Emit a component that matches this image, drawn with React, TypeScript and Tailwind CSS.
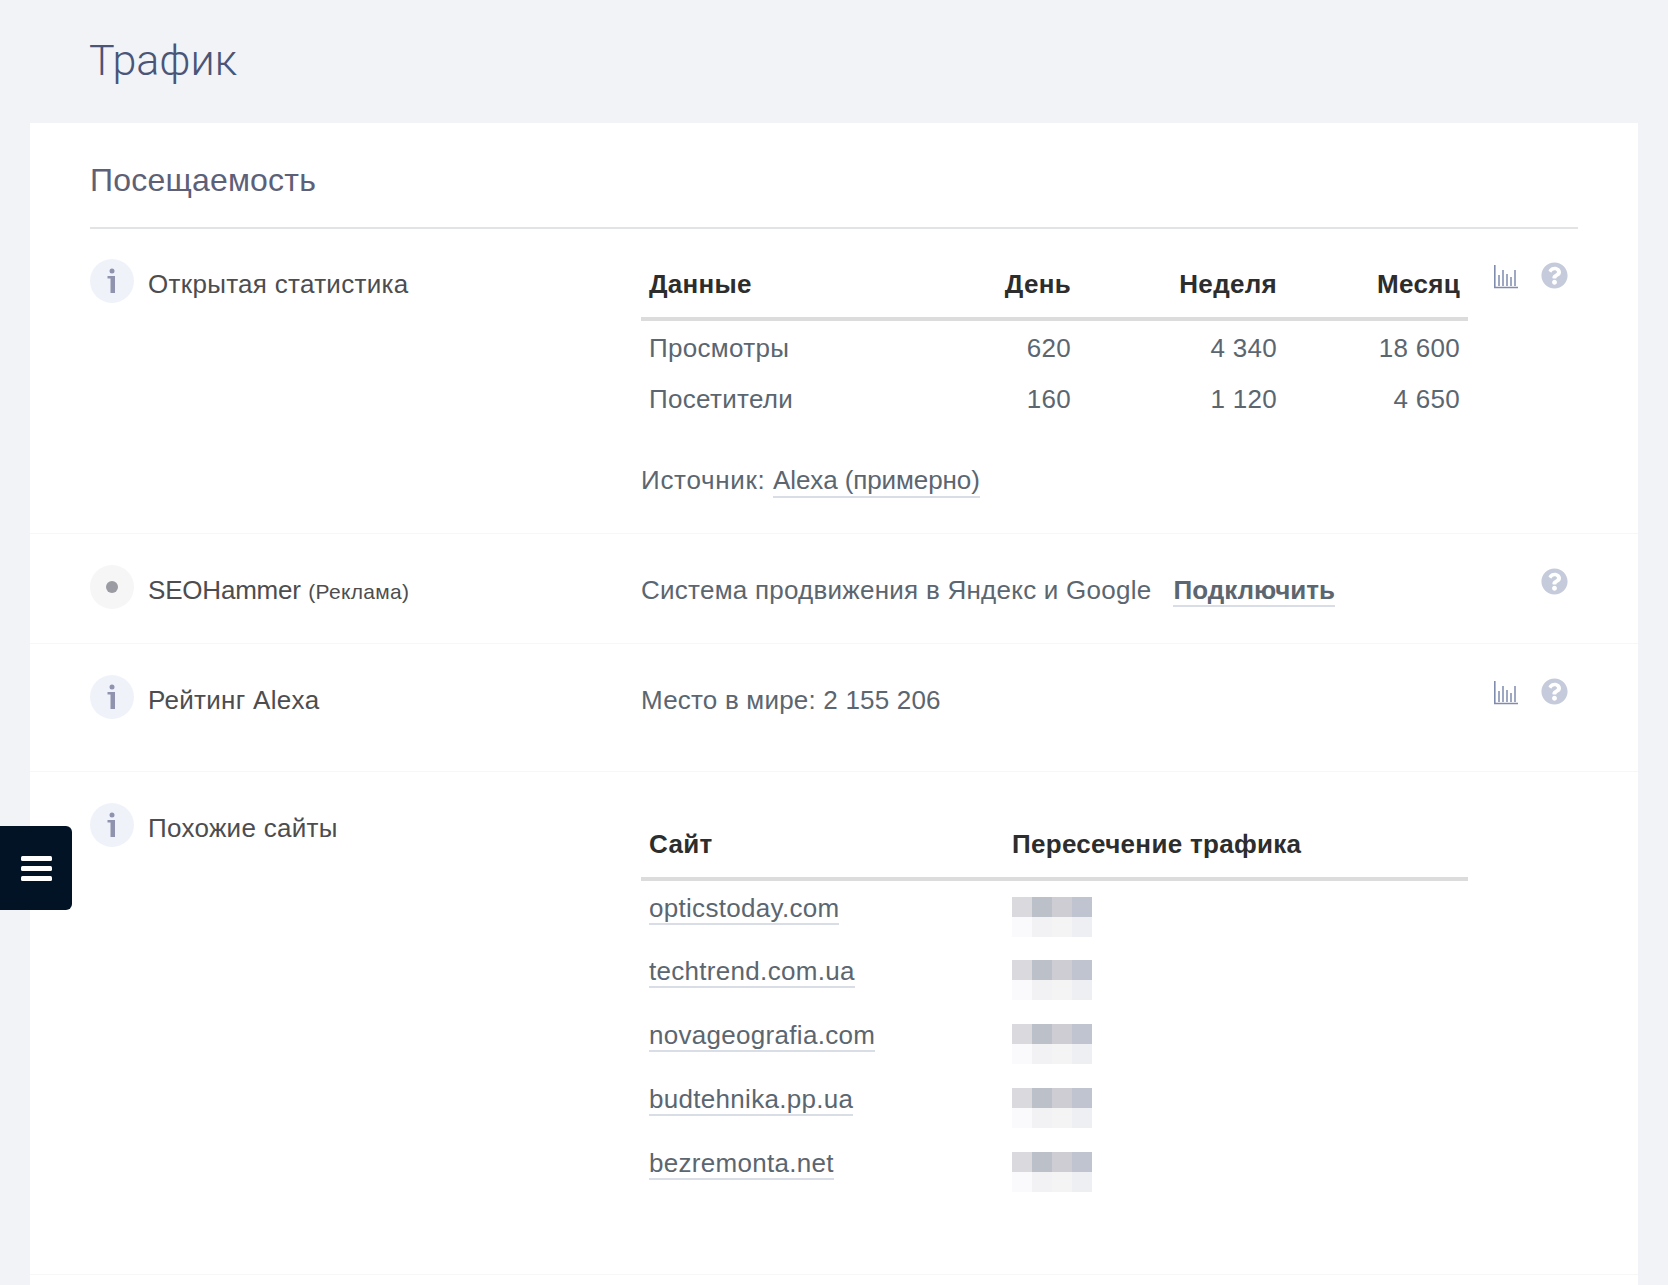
import React from 'react';
import { FaQuestionCircle } from 'react-icons/fa';

const sites = ['opticstoday.com', 'techtrend.com.ua', 'novageografia.com', 'budtehnika.pp.ua', 'bezremonta.net'];

const visits = [
  { name: 'Просмотры', day: '620', week: '4 340', month: '18 600' },
  { name: 'Посетители', day: '160', week: '1 120', month: '4 650' },
];

function InfoBadge() {
  return (
    <div className="flex h-11 w-11 shrink-0 items-center justify-center rounded-full bg-[#eff3f9]">
      <svg width="12" height="26" viewBox="0 0 12 26" fill="#8f93ad">
        <circle cx="6" cy="3" r="2.500" />
        <path d="M1.500 8h7.500v17H4.500V10.500h-3z" />
      </svg>
    </div>
  );
}

function DotBadge() {
  return (
    <div className="flex h-11 w-11 shrink-0 items-center justify-center rounded-full bg-[#f6f6f7]">
      <div className="h-3 w-3 rounded-full bg-[#9a9ba3]" />
    </div>
  );
}

function ChartIcon() {
  return (
    <svg width="24" height="24" viewBox="0 0 24 24" stroke="#7f8cae" fill="none" className="mt-[3px]">
      <path strokeWidth="1.600" d="M0.800 0v22.500H24" />
      <path strokeWidth="1.500" d="M5 10v11M9 5v16M13 9v12M17 12v9M21 5v16" />
    </svg>
  );
}

function Actions({ chart }: { chart?: boolean }) {
  return (
    <div className="ml-[26px] flex w-[74px] shrink-0 items-start justify-end gap-[23px] pt-[3px]">
      {chart && <ChartIcon />}
      <FaQuestionCircle size={27} color="#c5cbdb" />
    </div>
  );
}

function BlurThumb() {
  return (
    <div className="grid w-[80px] grid-cols-4 blur-[0.6px]">
      <div className="h-5 bg-[#d9d9de]" />
      <div className="h-5 bg-[#bcc0c8]" />
      <div className="h-5 bg-[#cdcdd3]" />
      <div className="h-5 bg-[#bfc4d0]" />
      <div className="h-5 bg-[#fafafc]" />
      <div className="h-5 bg-[#f2f2f4]" />
      <div className="h-5 bg-[#f4f4f5]" />
      <div className="h-5 bg-[#eeeff2]" />
    </div>
  );
}

function Row({ badge, label, actions, className, children }: {
  badge: React.ReactNode;
  label: React.ReactNode;
  actions?: React.ReactNode;
  className: string;
  children: React.ReactNode;
}) {
  return (
    <div className={`flex border-b border-[#f7f7f8] pr-[70px] pl-[60px] ${className}`}>
      <div className="flex w-[551px] shrink-0 gap-[14px]">
        {badge}
        <div className="pt-[3px] text-[26px] leading-[44px] tracking-[0.3px] text-[#4d4d4f]">{label}</div>
      </div>
      <div className="w-[827px] shrink-0 text-[26px] tracking-[0.3px] text-[#5b6670]">{children}</div>
      {actions}
    </div>
  );
}

export default function App() {
  return (
    <div className="relative min-h-screen overflow-hidden bg-[#f1f3f7] font-['Liberation_Sans',sans-serif]">
      <h1 className="h-[123px] pt-[31px] pl-[89px] font-['Roboto',sans-serif] text-[43px] leading-[58px] font-light text-[#4a5578]">
        Трафик
      </h1>

      <div className="mx-[30px] bg-white">
        <div className="px-[60px]">
          <h2 className="h-[106px] border-b-2 border-[#e2e3e5] pt-[32px] text-[32px] leading-[50px] tracking-[0.2px] text-[#5d6076]">
            Посещаемость
          </h2>
        </div>

        <Row badge={<InfoBadge />} label="Открытая статистика" actions={<Actions chart />} className="h-[305px] pt-[30px]">
          <table className="w-full table-fixed">
            <thead>
              <tr className="h-[60px] border-b-4 border-[#dcdcdc] text-[#2d2d2d]">
                <th className="w-[299px] pb-[8px] pl-2 text-left">Данные</th>
                <th className="w-[139px] pr-2 pb-[8px] text-right">День</th>
                <th className="w-[206px] pr-2 pb-[8px] text-right">Неделя</th>
                <th className="w-[183px] pr-2 pb-[8px] text-right">Месяц</th>
              </tr>
            </thead>
            <tbody>
              {visits.map((v) => (
                <tr key={v.name} className="h-[52px]">
                  <td className="pt-[5px] pl-2">{v.name}</td>
                  <td className="pt-[5px] pr-2 text-right">{v.day}</td>
                  <td className="pt-[5px] pr-2 text-right">{v.week}</td>
                  <td className="pt-[5px] pr-2 text-right">{v.month}</td>
                </tr>
              ))}
            </tbody>
          </table>
          <div className="mt-[41px] leading-[32px]">
            <span className="tracking-[0.7px]">Источник:</span>{' '}
            <a className="border-b-2 border-[#d8dde6] pb-[1px] tracking-[-0.1px]">Alexa (примерно)</a>
          </div>
        </Row>

        <Row
          badge={<DotBadge />}
          label={<><span className="tracking-[-0.2px]">SEOHammer</span> <span className="text-[21px]">(Реклама)</span></>}
          actions={<Actions />}
          className="h-[110px] pt-[31px]"
        >
          <div className="flex gap-[22px] pt-[3px] leading-[44px]">
            <span className="tracking-[0.25px]">Система продвижения в Яндекс и Google</span>
            <a className="h-[39px] border-b-2 border-[#d8dde6] font-bold tracking-normal">Подключить</a>
          </div>
        </Row>

        <Row badge={<InfoBadge />} label="Рейтинг Alexa" actions={<Actions chart />} className="h-[128px] pt-[31px]">
          <div className="pt-[3px] leading-[44px] tracking-[0.2px]">Место в мире: 2 155 206</div>
        </Row>

        <Row badge={<InfoBadge />} label="Похожие сайты" className="h-[503px] pt-[31px]">
          <table className="mt-[18px] w-full table-fixed">
            <thead>
              <tr className="h-[58px] border-b-4 border-[#dcdcdc] text-left text-[#2d2d2d]">
                <th className="w-[363px] pb-[10px] pl-2">Сайт</th>
                <th className="pb-[10px] pl-2">Пересечение трафика</th>
              </tr>
            </thead>
            <tbody>
              {sites.map((s) => (
                <tr key={s} className="h-[64px]">
                  <td className="pb-[7px] pl-2">
                    <a className="border-b-2 border-[#d8dde6]">{s}</a>
                  </td>
                  <td className="pt-[10px] pl-2">
                    <BlurThumb />
                  </td>
                </tr>
              ))}
            </tbody>
          </table>
        </Row>
        <div className="h-[12px]" />
      </div>

      <div className="absolute top-[826px] left-0 flex h-[84px] w-[72px] items-center justify-center rounded-r-md bg-[#021326]">
        <div className="flex w-[31px] flex-col gap-[5px]">
          <div className="h-[5px] rounded-[1.5px] bg-white" />
          <div className="h-[5px] rounded-[1.5px] bg-white" />
          <div className="h-[5px] rounded-[1.5px] bg-white" />
        </div>
      </div>
    </div>
  );
}
